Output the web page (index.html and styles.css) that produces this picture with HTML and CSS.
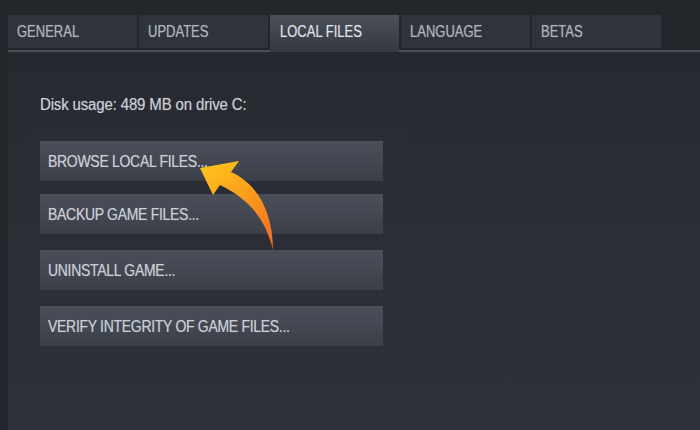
FILE: index.html
```html
<!DOCTYPE html>
<html lang="en">

<head>
  <meta charset="UTF-8">
  <meta name="viewport" content="width=device-width, initial-scale=1.0">
  <title>Local Files</title>
  <link rel="stylesheet" href="styles.css">
</head>

<body>
  <nav class="tabs">
    <div class="tab"><span class="label">GENERAL</span></div>
    <div class="tab"><span class="label">UPDATES</span></div>
    <div class="tab active"><span class="label">LOCAL FILES</span></div>
    <div class="tab"><span class="label">LANGUAGE</span></div>
    <div class="tab"><span class="label">BETAS</span></div>
  </nav>

  <main class="panel">
    <p class="disk"><span class="label">Disk usage: 489 MB on drive C:</span></p>

    <div class="group">
      <button class="btn"><span class="label">BROWSE LOCAL FILES...</span></button>
    </div>
    <button class="btn"><span class="label">BACKUP GAME FILES...</span></button>
    <button class="btn"><span class="label">UNINSTALL GAME...</span></button>
    <button class="btn"><span class="label">VERIFY INTEGRITY OF GAME FILES...</span></button>
  </main>

  <!-- flecha naranja que apunta al primer boton -->
  <svg class="arrow" width="700" height="430" viewBox="0 0 700 430">
    <defs>
      <linearGradient id="arrowGrad" x1="200" y1="165" x2="272" y2="250" gradientUnits="userSpaceOnUse">
        <stop offset="0" stop-color="#ffc61c" />
        <stop offset="0.45" stop-color="#fb9f1c" />
        <stop offset="1" stop-color="#ef6622" />
      </linearGradient>
    </defs>
    <path d="M200 168 L239 161 L231 172 C258 184 273 213 273 250 C265 217 247 198 220 185 L213 195 Z" fill="url(#arrowGrad)" />
  </svg>
</body>

</html>
```

FILE: styles.css
```css
*,
*::after,
*::before {
  box-sizing: border-box;
}

body {
  margin: 0;
  height: 430px;
  overflow: hidden;
  position: relative;
  background-color: #23262b;
  font-family: "Liberation Sans", Arial, sans-serif;
}

/* el texto de la captura esta estirado en vertical */
.label {
  display: inline-block;
  transform: scaleY(1.15);
  transform-origin: left center;
  white-space: nowrap;
  text-shadow: 0 0 1px rgba(200, 205, 212, 0.45);
}

/* Pestañas */
.tabs {
  display: flex;
  align-items: flex-start;
  gap: 2px;
  margin-left: 8px;
  padding-top: 15px;
  border-bottom: 2px solid #4a4f58;
}

.tab {
  width: 129px;
  height: 33px;
  margin-bottom: 2px;
  padding-left: 9px;
  display: flex;
  align-items: center;
  background-color: #2f333b;
  color: #aeb3bb;
  font-size: 13px;
}

.tab .label {
  transform: scaleY(1.25);
}

.tab.active {
  height: 37px;
  margin-bottom: -2px;
  padding-left: 10px;
  padding-bottom: 4px;
  position: relative;
  background: linear-gradient(#4a4f59, #353940);
  color: #e0e4ea;
}

/* Contenido */
.panel {
  margin-left: 8px;
  height: 378px;
  padding: 42px 0 0 32px;
  background: linear-gradient(#26292f, #2b2e35 45%, #2e3139);
}

.disk {
  margin: 0;
  height: 19px;
  line-height: 19px;
  color: #cbd0d7;
  font-size: 15px;
  letter-spacing: -0.15px;
}

.group {
  width: 375px;
  margin: 14px 0 0 -10px;
  padding: 14px 22px 9px 10px;
  background-color: #2a2d34;
}

.btn {
  display: flex;
  align-items: center;
  width: 343px;
  height: 40px;
  margin-top: 16px;
  padding: 0 0 0 8px;
  border: 0;
  background: linear-gradient(#4a4f5a, #3b3f48);
  color: #cbd0d7;
  font-family: inherit;
  font-size: 14px;
  letter-spacing: -0.3px;
  text-align: left;
}

.group .btn {
  margin-top: 0;
}

.group + .btn {
  margin-top: 4px;
}

.arrow {
  position: absolute;
  left: 0;
  top: 0;
  pointer-events: none;
}
```
